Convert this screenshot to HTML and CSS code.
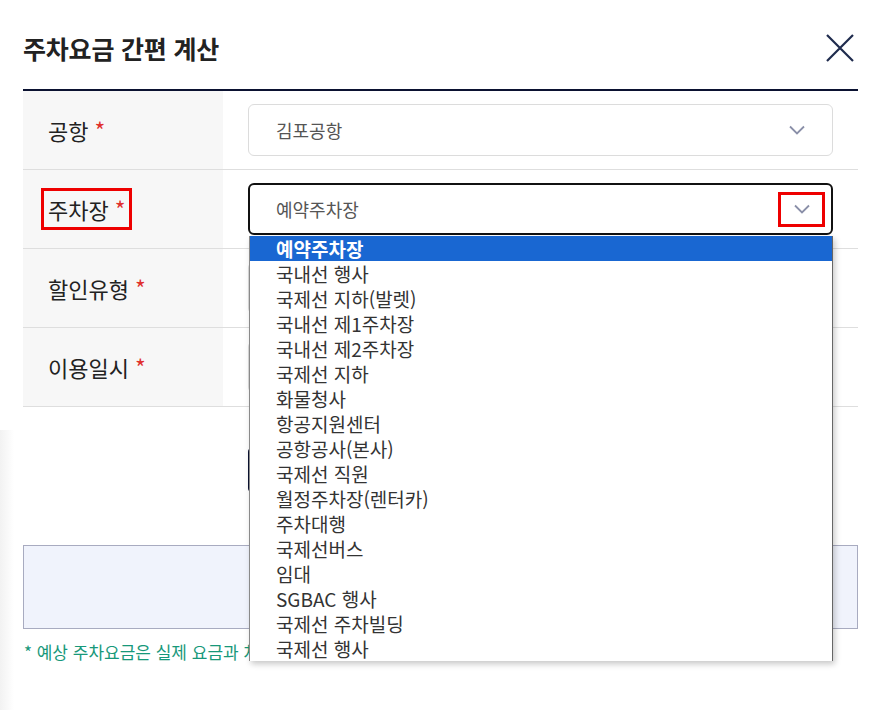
FILE: index.html
```html
<!DOCTYPE html>
<html lang="ko">
<head>
<meta charset="utf-8">
<title>주차요금 간편 계산</title>
<link rel="stylesheet" href="styles.css">
</head>
<body>
<div class="side-shade"></div>
<div class="modal">
  <header class="head">
    <h1 class="title">주차요금 간편 계산</h1>
    <button class="close" aria-label="닫기">
      <svg width="28" height="28" viewBox="0 0 28 28"><path d="M1 1 L27 27 M27 1 L1 27" stroke="#1f2b4d" stroke-width="2.2" fill="none"/></svg>
    </button>
  </header>

  <div class="form">
    <div class="row">
      <div class="label">공항<span class="req">*</span></div>
      <div class="cell">
        <div class="select">
          <span class="val">김포공항</span>
          <span class="chev"><svg width="16" height="10" viewBox="0 0 16 10"><path d="M1 1.5 L8 8.5 L15 1.5" stroke="#8a8fa8" stroke-width="1.8" fill="none"/></svg></span>
        </div>
      </div>
    </div>
    <div class="row">
      <div class="label"><span class="mark">주차장<span class="req">*</span></span></div>
      <div class="cell open">
        <div class="select focus">
          <span class="val">예약주차장</span>
          <span class="chev marked"><svg width="16" height="10" viewBox="0 0 16 10"><path d="M1 1.5 L8 8.5 L15 1.5" stroke="#8a8fa8" stroke-width="1.8" fill="none"/></svg></span>
        </div>
        <ul class="list">
          <li class="sel">예약주차장</li>
          <li>국내선 행사</li>
          <li>국제선 지하(발렛)</li>
          <li>국내선 제1주차장</li>
          <li>국내선 제2주차장</li>
          <li>국제선 지하</li>
          <li>화물청사</li>
          <li>항공지원센터</li>
          <li>공항공사(본사)</li>
          <li>국제선 직원</li>
          <li>월정주차장(렌터카)</li>
          <li>주차대행</li>
          <li>국제선버스</li>
          <li>임대</li>
          <li>SGBAC 행사</li>
          <li>국제선 주차빌딩</li>
          <li>국제선 행사</li>
        </ul>
      </div>
    </div>
    <div class="row">
      <div class="label">할인유형<span class="req">*</span></div>
      <div class="cell"><div class="select"></div></div>
    </div>
    <div class="row">
      <div class="label">이용일시<span class="req">*</span></div>
      <div class="cell"><div class="select"></div></div>
    </div>
  </div>

  <div class="actions">
    <button class="calc">계산하기</button>
  </div>

  <div class="result"></div>
  <p class="note">* 예상 주차요금은 실제 요금과 차</p>
</div>
</body>
</html>
```

FILE: styles.css
```css
* { box-sizing: border-box; }
html, body { margin: 0; padding: 0; background: #fff; }
body {
  font-family: "Noto Sans CJK KR", "Noto Sans", sans-serif;
  color: #222;
  width: 884px;
  height: 710px;
  overflow: hidden;
  position: relative;
}
.side-shade {
  position: absolute;
  left: 0;
  top: 430px;
  width: 14px;
  height: 280px;
  background: linear-gradient(to right, #f2f2f2, rgba(255,255,255,0));
}
.modal {
  padding: 0 26px 0 23px;
  position: relative;
}
.head {
  height: 91px;
  display: flex;
  align-items: center;
  justify-content: space-between;
  border-bottom: 2px solid #0b1231;
  padding-top: 6px;
}
.title {
  margin: 0;
  font-size: 25px;
  font-weight: 700;
  letter-spacing: -0.2px;
  color: #222;
}
.close {
  border: 0;
  background: none;
  padding: 0;
  margin-right: 4px;
  width: 28px;
  height: 28px;
  display: flex;
}
.form { display: flex; flex-direction: column; }
.row {
  display: flex;
  height: 79px;
  border-bottom: 1px solid #dedede;
}
.label {
  width: 200px;
  background: #f7f7f7;
  display: flex;
  align-items: center;
  padding-left: 25px;
  font-size: 22px;
  color: #222;
}
.req {
  color: #e0302d;
  margin-left: 6px;
  font-size: 23px;
}
.mark {
  border: 3px solid #ee0000;
  padding: 1px 4px 1px 4px;
  margin-left: -7px;
  display: inline-flex;
  align-items: center;
}
.cell {
  flex: 1;
  display: flex;
  align-items: center;
  padding: 0 25px;
  position: relative;
}
.select {
  width: 100%;
  height: 52px;
  border: 1px solid #dcdcdc;
  border-radius: 6px;
  display: flex;
  align-items: center;
  justify-content: space-between;
  padding: 0 27px 0 27px;
  font-size: 18px;
  color: #555;
  background: #fff;
}
.select.focus {
  border: 2px solid #111;
  height: 52px;
  padding-left: 26px;
}
.chev { display: flex; align-items: center; }
.chev.marked {
  border: 3px solid #ee0000;
  width: 47px;
  height: 35px;
  justify-content: center;
  margin-right: -21px;
}
.list {
  position: absolute;
  left: 26px;
  right: 25px;
  top: 66px;
  margin: 0;
  padding: 0;
  list-style: none;
  background: #fff;
  border-left: 1px solid #8a8a8a;
  border-right: 1px solid #666;
  box-shadow: 2px 3px 6px rgba(0,0,0,0.22);
  z-index: 5;
}
.list li {
  height: 25px;
  line-height: 25px;
  padding-left: 26px;
  font-size: 19px;
  color: #333;
}
.list li.sel {
  background: #1967d2;
  color: #fff;
  font-weight: 700;
}
.actions {
  display: flex;
  padding-left: 225px;
  margin-top: 41px;
}
.calc {
  width: 385px;
  height: 44px;
  background: #0b1231;
  color: #fff;
  border: 0;
  border-radius: 4px;
  font-family: inherit;
  font-size: 17px;
}
.result {
  margin-top: 53px;
  height: 84px;
  background: #f0f3fc;
  border: 1px solid #a8abc0;
}
.note {
  margin: 10px 0 0 1px;
  font-size: 17px;
  color: #17987a;
  white-space: nowrap;
}
```
